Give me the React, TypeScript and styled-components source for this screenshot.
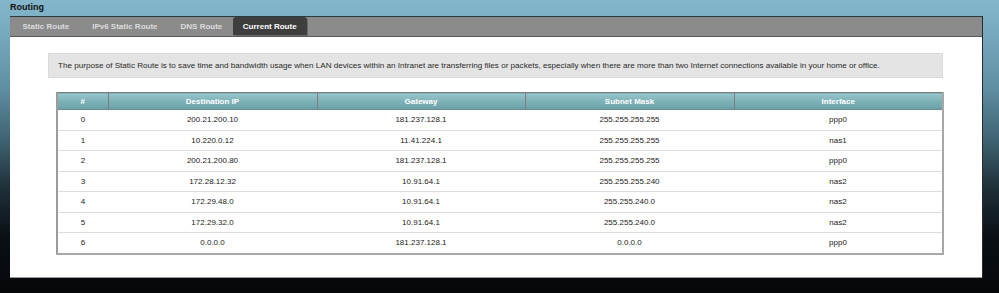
import React from "react";
import styled, { createGlobalStyle } from "styled-components";

const GlobalStyle = createGlobalStyle`
  html, body { margin: 0; padding: 0; }
  body {
    width: 999px;
    height: 293px;
    overflow: hidden;
    font-family: "Liberation Sans", Arial, sans-serif;
    background: linear-gradient(to bottom, #84b6cc 0%, #76a8be 12%, #5f8fa2 30%, #3f6272 48%, #1f3039 64%, #0b1116 80%, #05070a 100%);
  }
`;

const Page = styled.div`
  width: 999px;
  height: 293px;
  padding: 0 16px 0 10px;
  box-sizing: border-box;
  display: flex;
  flex-direction: column;
`;

const Title = styled.h1`
  margin: 0;
  height: 16px;
  padding-top: 1px;
  box-sizing: border-box;
  font-size: 9px;
  line-height: 12px;
  font-weight: bold;
  color: #111;
`;

const Panel = styled.section`
  width: 972px;
  display: flex;
  flex-direction: column;
  border-right: 1px solid #2a2a2a;
`;

const TabBar = styled.nav`
  height: 21px;
  box-sizing: border-box;
  background: #8b8b8b;
  border-top: 1px solid #2c3a40;
  border-bottom: 1px solid #5a5a5a;
  display: flex;
  align-items: flex-start;
  padding-left: 1px;
`;

const Tab = styled.div<{ $active?: boolean }>`
  height: 18px;
  padding: 0 ${(p) => (p.$active ? "10px" : "11.5px")};
  margin-left: ${(p) => (p.$active ? "-1px" : "0")};
  display: flex;
  align-items: center;
  font-size: 8px;
  font-weight: bold;
  color: ${(p) => (p.$active ? "#ffffff" : "#dcdcdc")};
  background: ${(p) => (p.$active ? "#3e3e3e" : "transparent")};
  border-radius: 3px 3px 0 0;
  box-shadow: ${(p) => (p.$active ? "1px 1px 0 #6a6a6a" : "none")};
  white-space: nowrap;
`;

const Content = styled.div`
  background: #ffffff;
  height: 241px;
  box-sizing: border-box;
  padding: 16px 39px 0 38px;
  border-bottom: 1px solid #9a9a9a;
`;

const InfoBox = styled.div`
  height: 25px;
  box-sizing: border-box;
  background: #e4e4e4;
  border: 1px dotted #d0d0d0;
  padding-left: 9px;
  display: flex;
  align-items: center;
  font-size: 8.1px;
  color: #2b2b2b;
  white-space: nowrap;
`;

const Table = styled.table`
  margin: 14px 0 0 8px;
  width: 886px;
  border-collapse: collapse;
  table-layout: fixed;
  border-left: 2px solid #9c9c9c;
  border-right: 2px solid #a8a8a8;
  border-bottom: 2px solid #a8a8a8;
  border-top: 1px solid #7d7d7d;
`;

const HeadCell = styled.th`
  height: 16px;
  padding: 0;
  font-size: 8px;
  font-weight: bold;
  color: #ffffff;
  text-align: center;
  background: linear-gradient(to bottom, #98c6cc 0%, #7fb3ba 45%, #6aa0a8 100%);
  border-left: 1px solid #7d7d7d;
  border-bottom: 1px solid #6b8a8e;
  &:first-child { border-left: none; }
`;

const Row = styled.tr`
  & + & td { border-top: 1px solid #dedede; }
`;

const Cell = styled.td`
  height: 19.5px;
  padding: 0;
  font-size: 8px;
  color: #222;
  text-align: center;
  background: #fff;
`;

const routes = [
  ["0", "200.21.200.10", "181.237.128.1", "255.255.255.255", "ppp0"],
  ["1", "10.220.0.12", "11.41.224.1", "255.255.255.255", "nas1"],
  ["2", "200.21.200.80", "181.237.128.1", "255.255.255.255", "ppp0"],
  ["3", "172.28.12.32", "10.91.64.1", "255.255.255.240", "nas2"],
  ["4", "172.29.48.0", "10.91.64.1", "255.255.240.0", "nas2"],
  ["5", "172.29.32.0", "10.91.64.1", "255.255.240.0", "nas2"],
  ["6", "0.0.0.0", "181.237.128.1", "0.0.0.0", "ppp0"],
];

export default function App() {
  return (
    <>
      <GlobalStyle />
      <Page>
        <Title>Routing</Title>
        <Panel>
          <TabBar>
            <Tab>Static Route</Tab>
            <Tab>IPv6 Static Route</Tab>
            <Tab>DNS Route</Tab>
            <Tab $active>Current Route</Tab>
          </TabBar>
          <Content>
            <InfoBox>
              The purpose of Static Route is to save time and bandwidth usage when LAN devices within an Intranet are transferring files or packets, especially when there are more than two Internet connections available in your home or office.
            </InfoBox>
            <Table>
              <colgroup>
                <col style={{ width: 51 }} />
                <col style={{ width: 209 }} />
                <col style={{ width: 208 }} />
                <col style={{ width: 209 }} />
                <col style={{ width: 209 }} />
              </colgroup>
              <thead>
                <tr>
                  <HeadCell>#</HeadCell>
                  <HeadCell>Destination IP</HeadCell>
                  <HeadCell>Gateway</HeadCell>
                  <HeadCell>Subnet Mask</HeadCell>
                  <HeadCell>Interface</HeadCell>
                </tr>
              </thead>
              <tbody>
                {routes.map((r) => (
                  <Row key={r[0]}>
                    {r.map((v, i) => (
                      <Cell key={i}>{v}</Cell>
                    ))}
                  </Row>
                ))}
              </tbody>
            </Table>
          </Content>
        </Panel>
      </Page>
    </>
  );
}
